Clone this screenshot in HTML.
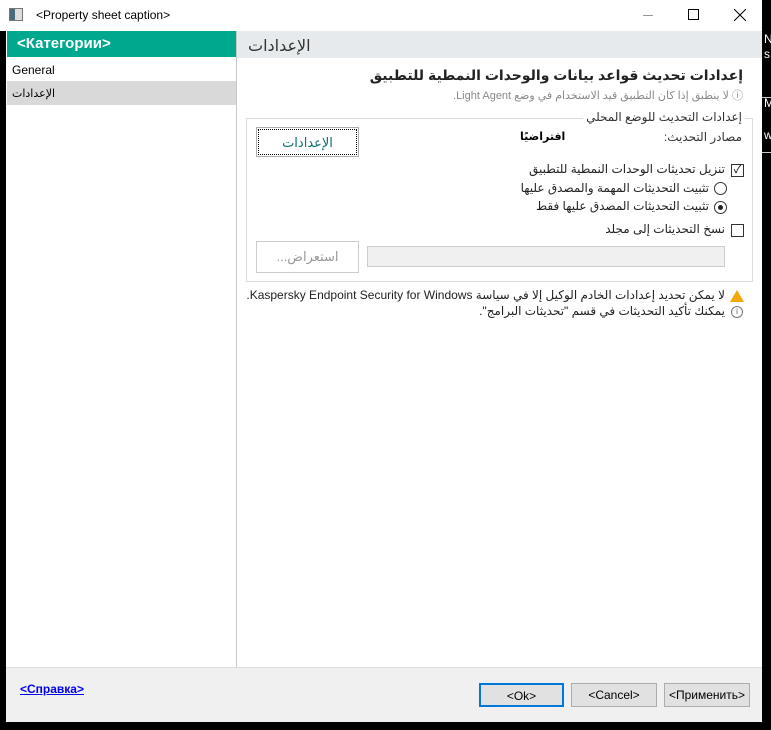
<!DOCTYPE html>
<html><head><meta charset="utf-8"><style>
*{margin:0;padding:0;box-sizing:border-box}
body{width:771px;height:730px;background:#000;position:relative;overflow:hidden;font-family:"Liberation Sans","Noto Sans CJK SC","DejaVu Sans",sans-serif;font-size:12px;color:#000}
.a{position:absolute}
.r{direction:rtl;text-align:right;white-space:nowrap}
.btn{position:absolute;border:1px solid #adadad;background:#e1e1e1;text-align:center;font-size:12px;line-height:30px}
</style></head><body>
<div class="a" style="left:0;top:0;width:762px;height:31px;background:#fff"></div>
<div class="a" style="left:9px;top:8px;width:14px;height:13px;border:1px solid #777;background:linear-gradient(90deg,#4a6a7a 0 5px,#ddd 5px)"></div>
<div class="a" style="left:36px;top:8px;font-size:12px">&lt;Property sheet caption&gt;</div>
<div class="a" style="left:643px;top:15px;width:10px;height:1px;background:#999"></div>
<div class="a" style="left:688px;top:9px;width:11px;height:11px;border:1px solid #000"></div>
<svg class="a" style="left:734px;top:9px" width="12" height="12"><path d="M0 0L12 12M12 0L0 12" stroke="#000" stroke-width="1"/></svg>
<div class="a" style="left:6px;top:31px;width:756px;height:691px;background:#fff"></div>
<div class="a" style="left:7px;top:31px;width:229px;height:26px;background:#00a88e;color:#fff;font-weight:bold;font-size:15px;line-height:26px;padding-left:10px">&lt;Категории&gt;</div>
<div class="a" style="left:12px;top:63px">General</div>
<div class="a" style="left:7px;top:81px;width:229px;height:24px;background:#d9d9d9"></div>
<div class="a r" style="left:12px;top:87px;font-size:11px;direction:rtl">الإعدادات</div>
<div class="a" style="left:236px;top:31px;width:1px;height:636px;background:#c8c8c8"></div>
<div class="a" style="left:237px;top:31px;width:525px;height:27px;background:#e6eaec"></div>
<div class="a r" style="left:248px;top:36px;font-size:16px;color:#333;direction:rtl;text-align:left">الإعدادات</div>
<div class="a r" style="right:28px;top:67px;font-size:14px;font-weight:bold;color:#222">إعدادات تحديث قواعد بيانات والوحدات النمطية للتطبيق</div>
<div class="a r" style="right:28px;top:87px;font-size:11px;color:#888">ⓘ لا ينطبق إذا كان التطبيق قيد الاستخدام في وضع Light Agent.</div>
<div class="a" style="left:246px;top:118px;width:507px;height:164px;border:1px solid #dcdcdc"></div>
<div class="a r" style="right:26px;top:110px;background:#fff;padding:0 3px;font-size:12px;color:#333">إعدادات التحديث للوضع المحلي</div>
<div class="a r" style="right:29px;top:130px;font-size:12px;color:#333">مصادر التحديث:</div>
<div class="a r" style="left:520px;top:130px;font-size:11px;font-weight:bold;direction:rtl">افتراضيًا</div>
<div class="btn" style="left:256px;top:127px;width:103px;height:30px;background:#fff;border:1px solid #adadad;outline:1px dotted #000;outline-offset:-3px;color:#0a6e6e;font-size:13px">الإعدادات</div>
<div class="a" style="left:731px;top:164px;width:13px;height:13px;border:1px solid #333;font-size:11px;line-height:11px;text-align:center">✓</div>
<div class="a r" style="right:46px;top:162px;color:#222">تنزيل تحديثات الوحدات النمطية للتطبيق</div>
<div class="a" style="left:714px;top:182px;width:13px;height:13px;border:1px solid #333;border-radius:50%"></div>
<div class="a r" style="right:62px;top:181px;color:#222">تثبيت التحديثات المهمة والمصدق عليها</div>
<div class="a" style="left:714px;top:201px;width:13px;height:13px;border:1px solid #333;border-radius:50%"></div>
<div class="a" style="left:718px;top:205px;width:5px;height:5px;background:#222;border-radius:50%"></div>
<div class="a r" style="right:62px;top:199px;color:#222">تثبيت التحديثات المصدق عليها فقط</div>
<div class="a" style="left:731px;top:224px;width:13px;height:13px;border:1px solid #333"></div>
<div class="a r" style="right:46px;top:222px;color:#222">نسخ التحديثات إلى مجلد</div>
<div class="btn" style="left:256px;top:241px;width:103px;height:32px;background:#fff;border:1px solid #ccc;color:#999;font-size:13px;direction:rtl">استعراض...</div>
<div class="a" style="left:367px;top:246px;width:358px;height:21px;border:1px solid #ccc;background:#f0f0f0"></div>
<div class="a" style="left:730px;top:290px;width:0;height:0;border-left:7px solid transparent;border-right:7px solid transparent;border-bottom:12px solid #f5a800"></div>
<div class="a r" style="right:46px;top:288px;color:#222">لا يمكن تحديد إعدادات الخادم الوكيل إلا في سياسة Kaspersky Endpoint Security for Windows.</div>
<div class="a" style="left:731px;top:306px;width:12px;height:12px;border:1px solid #777;border-radius:50%;font-size:8px;text-align:center;line-height:10px;color:#555">i</div>
<div class="a r" style="right:46px;top:304px;color:#222">يمكنك تأكيد التحديثات في قسم "تحديثات البرامج".</div>
<div class="a" style="left:6px;top:667px;width:756px;height:55px;background:#f0f0f0;border-top:1px solid #ddd"></div>
<div class="a" style="left:20px;top:682px;color:#00e;text-decoration:underline;font-weight:bold">&lt;Справка&gt;</div>
<div class="btn" style="left:479px;top:683px;width:85px;height:24px;line-height:22px;border:2px solid #0078d7">&lt;Ok&gt;</div>
<div class="btn" style="left:571px;top:683px;width:86px;height:24px;line-height:22px">&lt;Cancel&gt;</div>
<div class="btn" style="left:664px;top:683px;width:86px;height:24px;line-height:22px">&lt;Применить&gt;</div>
<div class="a" style="left:764px;top:32px;color:#fff;font-size:12px;line-height:15px">N<br>s</div>
<div class="a" style="left:762px;top:97px;width:9px;height:1px;background:#ccc"></div>
<div class="a" style="left:764px;top:96px;color:#fff;font-size:12px">Ma</div>
<div class="a" style="left:764px;top:128px;color:#fff;font-size:12px">wi</div>
<div class="a" style="left:762px;top:152px;width:9px;height:1px;background:#ccc"></div>
</body></html>
